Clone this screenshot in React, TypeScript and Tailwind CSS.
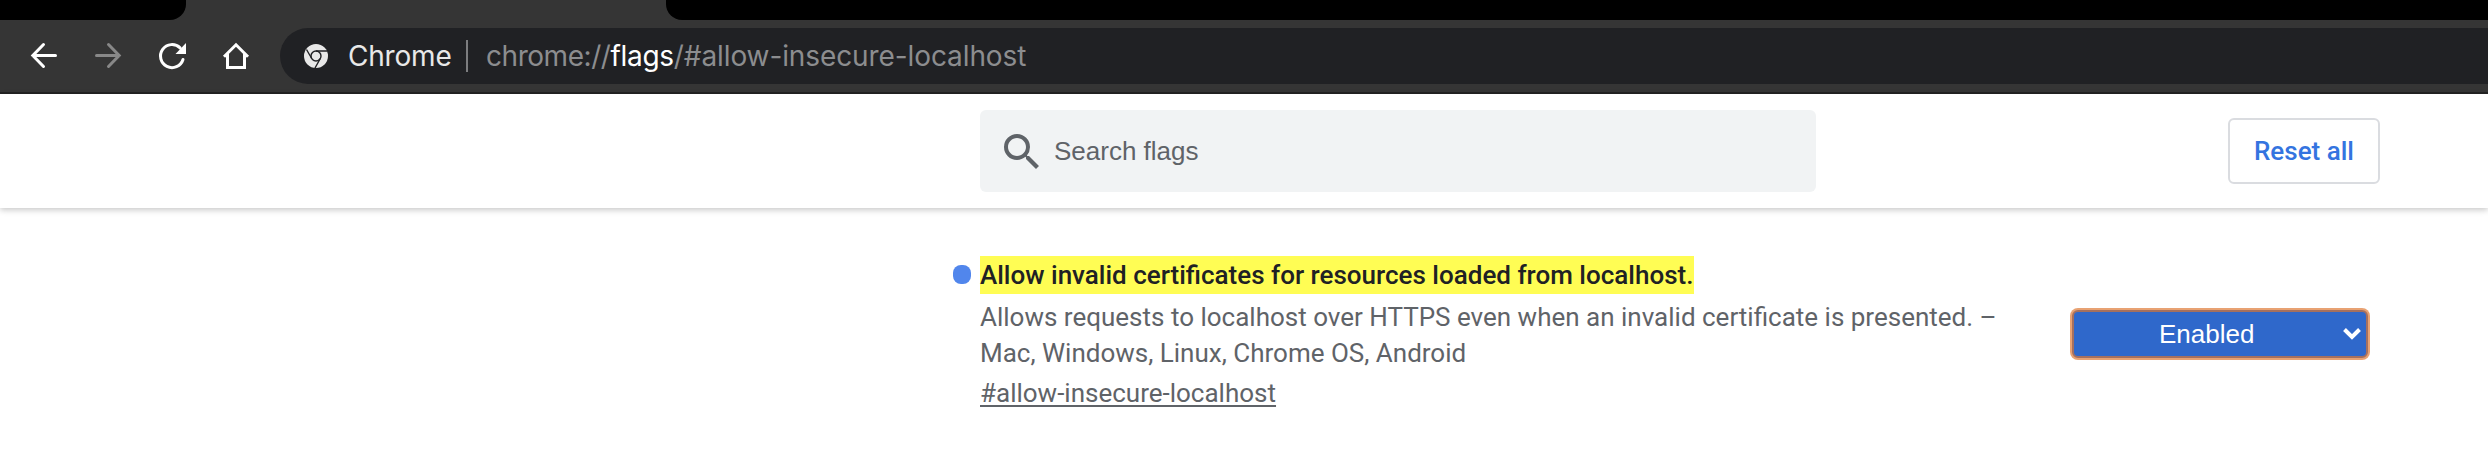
import React from 'react';

function ToolbarIcons() {
  return (
    <div className="flex items-center text-white">
      <svg className="ml-7 size-8" viewBox="0 0 32 32" fill="none" stroke="currentColor" strokeWidth="3" strokeLinecap="round">
        <path d="M27.500 15.500H5M15.500 4.500 4.800 15.500l10.700 11" />
      </svg>
      <svg className="ml-8 size-8 text-[#888888]" viewBox="0 0 32 32" fill="none" stroke="currentColor" strokeWidth="3" strokeLinecap="round">
        <path d="M4.500 15.500H27M16.500 4.500 27.200 15.500l-10.700 11" />
      </svg>
      <svg className="ml-8 size-8" viewBox="0 0 32 32" fill="none" stroke="currentColor" strokeWidth="3" strokeLinecap="round">
        <path d="M24.100 7.900A11.500 11.500 0 1 0 27 19.500" />
        <path d="M30 3v11H19.500z" fill="currentColor" stroke="none" />
      </svg>
      <svg className="ml-8 size-8" viewBox="0 0 32 32" fill="none" stroke="currentColor" strokeWidth="3">
        <path d="M4 16.800 16 4.800l12 12M7.500 14v13.500h17V14" />
      </svg>
    </div>
  );
}

function ChromeLogo() {
  return (
    <svg className="size-6 shrink-0" viewBox="0 0 24 24">
      <circle cx="12" cy="12" r="12" fill="#e8e8e8" />
      <g fill="none" stroke="#202124" strokeWidth="1.400">
        <circle cx="12" cy="12" r="5" />
        <path d="M12 7h11M7.700 14.500 2.500 5.500M16.300 14.500 11 24" />
      </g>
    </svg>
  );
}

function BrowserBar() {
  return (
    <div className="h-[94px] border-b-2 border-[#232323] bg-[#353535]">
      <div className="flex h-5 justify-between">
        <div className="w-[186px] rounded-br-2xl bg-black" />
        <div className="w-[1822px] rounded-bl-2xl bg-black" />
      </div>
      <div className="flex pt-2">
        <ToolbarIcons />
        <div className="ml-7 flex h-14 flex-1 items-center rounded-l-full bg-[#202124] pl-6 font-['Inter',sans-serif] text-[28px] leading-8">
          <ChromeLogo />
          <span className="ml-5 w-[110px] whitespace-nowrap tracking-[-0.200px] text-[#e8e8e8]">Chrome</span>
          <span className="ml-[8px] h-8 w-0.5 bg-[#7c7d7f]" />
          <span className="ml-[18px] whitespace-nowrap tracking-[-0.100px] text-[#8c8d8f]">
            <span className="tracking-[-0.450px]">chrome://</span>
            <span className="tracking-[-0.300px] text-white">flags</span>/#allow-insecure-localhost
          </span>
        </div>
      </div>
    </div>
  );
}

function SearchHeader() {
  return (
    <header className="flex h-[114px] items-center bg-white pl-[980px] pr-[108px] shadow-[0_2px_6px_rgba(0,0,0,0.22)]">
      <div className="flex h-[82px] w-[836px] items-center rounded-md bg-[#f1f3f4] pl-[18px] text-[#5f6368]">
        <svg className="mt-0.5 size-12" viewBox="0 0 24 24" fill="currentColor">
          <path d="M15.500 14h-.790l-.280-.270A6.471 6.471 0 0 0 16 9.500 6.500 6.500 0 1 0 9.500 16c1.610 0 3.090-.590 4.230-1.570l.270.280v.790l5 4.990L20.490 19l-4.990-5zm-6 0C7.010 14 5 11.990 5 9.500S7.010 5 9.500 5 14 7.010 14 9.500 11.990 14 9.500 14z" />
        </svg>
        <span className="ml-2 font-['Liberation_Sans',sans-serif] text-[26px] leading-[30px]">Search flags</span>
      </div>
      <button className="ml-auto h-[66px] w-[152px] rounded-md border-2 border-[#dadce0] font-['Roboto',sans-serif] text-[26px] font-medium text-[#3474e0]">
        Reset all
      </button>
    </header>
  );
}

function FlagRow() {
  return (
    <main className="flex pl-[953px] pt-12 font-['Roboto',sans-serif] text-[26px] leading-9 text-[#5f6368]">
      <span className="mt-[9px] h-[19px] w-[18px] rounded-lg bg-[#5186ec]" />
      <div className="ml-[9px] w-[1040px]">
        <h2 className="w-[714px] whitespace-nowrap bg-[#fffd54] font-medium leading-[38px] text-[#202124]">
          Allow invalid certificates for resources loaded from localhost.
        </h2>
        <p className="mt-[5px] whitespace-nowrap">
          Allows requests to localhost over HTTPS even when an invalid certificate is presented. –<br />
          Mac, Windows, Linux, Chrome OS, Android
        </p>
        <a className="mt-1 block w-fit underline decoration-2 underline-offset-[3px]">#allow-insecure-localhost</a>
      </div>
      <div className="ml-[50px] mt-[52px] h-[52px] w-[300px] rounded-lg bg-[#e8a273] p-0.5">
        <div className="flex h-full items-center rounded-md border-2 border-[#a5705f] bg-[#2f68cb] pl-[85px] pr-[5px] font-['Liberation_Sans',sans-serif] text-white">
          <span>Enabled</span>
          <svg className="ml-auto h-3 w-[18px]" viewBox="0 0 18 12" fill="none" stroke="currentColor" strokeWidth="4">
            <path d="m1.500 1.500 7.500 7.500 7.500-7.500" />
          </svg>
        </div>
      </div>
    </main>
  );
}

export default function App() {
  return (
    <div className="h-[450px] w-[2488px] overflow-hidden bg-white">
      <BrowserBar />
      <SearchHeader />
      <FlagRow />
    </div>
  );
}
